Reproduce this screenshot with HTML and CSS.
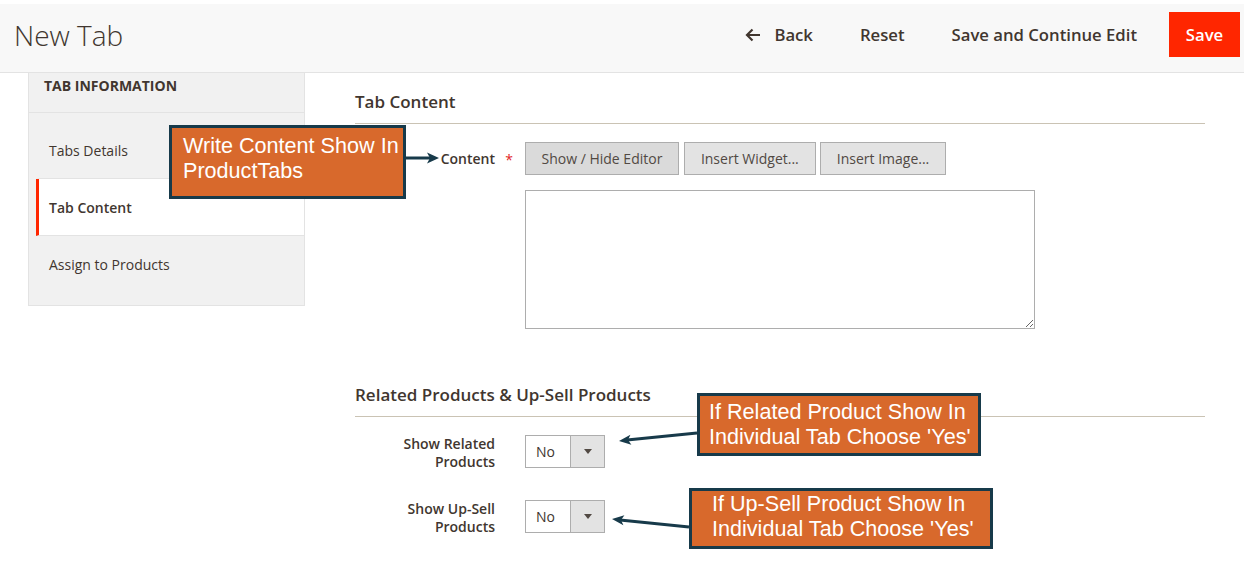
FILE: index.html
```html
<!DOCTYPE html>
<html>
<head>
<meta charset="utf-8">
<title>New Tab</title>
<link rel="stylesheet" href="styles.css">
</head>
<body>
<div class="page">
  <header class="page-header">
    <h1 class="page-title">New Tab</h1>
    <div class="actions">
      <button class="action back"><svg class="back-arrow" width="16" height="14" viewBox="0 0 16 14"><path d="M15 7H2.5M7.5 1.5L2 7l5.5 5.5" fill="none" stroke="#41362f" stroke-width="2.2"/></svg>Back</button>
      <button class="action">Reset</button>
      <button class="action">Save and Continue Edit</button>
      <button class="action primary">Save</button>
    </div>
  </header>

  <div class="columns">
    <aside class="sidebar">
      <div class="sidebar-title">Tab Information</div>
      <ul class="tabs">
        <li class="tab">Tabs Details</li>
        <li class="tab active">Tab Content</li>
        <li class="tab">Assign to Products</li>
      </ul>
    </aside>

    <main class="main">
      <section class="fieldset">
        <h2 class="fieldset-title">Tab Content</h2>
        <div class="field">
          <label class="field-label">Content<span class="req">*</span></label>
          <div class="field-control">
            <div class="editor-buttons">
              <button class="btn active">Show / Hide Editor</button>
              <button class="btn">Insert Widget...</button>
              <button class="btn">Insert Image...</button>
            </div>
            <textarea class="textarea"></textarea>
          </div>
        </div>
      </section>

      <section class="fieldset related">
        <h2 class="fieldset-title">Related Products &amp; Up-Sell Products</h2>
        <div class="field select-field">
          <label class="field-label multi">Show Related Products</label>
          <div class="field-control">
            <div class="select"><span class="select-value">No</span><span class="select-arrow"></span></div>
          </div>
        </div>
        <div class="field select-field">
          <label class="field-label multi">Show Up-Sell Products</label>
          <div class="field-control">
            <div class="select"><span class="select-value">No</span><span class="select-arrow"></span></div>
          </div>
        </div>
      </section>
    </main>
  </div>

  <div class="note note-content">Write Content Show In ProductTabs</div>
  <div class="note note-related">If Related Product Show In Individual Tab Choose 'Yes'</div>
  <div class="note note-upsell">If Up-Sell Product Show In Individual Tab Choose 'Yes'</div>

  <svg class="arrows" width="1244" height="573" viewBox="0 0 1244 573">
    <g stroke="#173a4a" stroke-width="3" fill="none">
      <line x1="406" y1="158" x2="430" y2="158"/>
      <line x1="697" y1="433" x2="627" y2="440"/>
      <line x1="689" y1="527" x2="620" y2="520"/>
    </g>
    <g fill="#173a4a">
      <polygon points="439,158 427,152.5 430,158 427,163.5"/>
      <polygon points="619,441 630.4,434.8 628,440.1 631.4,444.8"/>
      <polygon points="612,519 624.4,515.3 621,519.9 623.4,525.3"/>
    </g>
  </svg>
</div>
</body>
</html>
```

FILE: styles.css
```css
* { box-sizing: border-box; }

html, body {
  margin: 0;
  padding: 0;
  background: #ffffff;
}

body {
  font-family: "Open Sans", "Liberation Sans", sans-serif;
  color: #41362f;
  width: 1244px;
  height: 573px;
  overflow: hidden;
}

.page {
  position: relative;
  width: 1244px;
  height: 573px;
  padding-top: 4px;
}

/* Header */
.page-header {
  display: flex;
  align-items: center;
  justify-content: space-between;
  height: 69px;
  background: #f8f8f8;
  border-bottom: 1px solid #e3e3e3;
  padding: 0 4px 7px 14px;
}

.page-title {
  margin: 0;
  font-size: 28px;
  font-weight: 300;
  line-height: 38px;
  color: #41362f;
}

.actions {
  display: flex;
  align-items: center;
  gap: 17px;
}

.action {
  display: flex;
  align-items: center;
  font-family: "Open Sans", "Liberation Sans", sans-serif;
  font-size: 16.7px;
  font-weight: 600;
  color: #41362f;
  background: transparent;
  border: 0;
  padding: 0 15px;
  height: 45px;
  cursor: pointer;
}

.back-arrow {
  margin-right: 13px;
}

.action.primary {
  justify-content: center;
  background: #ff2600;
  color: #ffffff;
  width: 71px;
  padding: 0;
}

/* Columns */
.columns {
  display: flex;
  gap: 50px;
  padding: 0 39px 0 28px;
}

.sidebar {
  width: 277px;
  flex: none;
  background: #f1f1f1;
  border: 1px solid #e3e3e3;
  border-top: 0;
  height: 233px;
}

.sidebar-title {
  height: 40px;
  padding: 4px 0 0 15px;
  font-size: 14px;
  font-weight: 700;
  text-transform: uppercase;
  line-height: 18px;
  border-bottom: 1px solid #e3e3e3;
  color: #41362f;
}

.tabs {
  list-style: none;
  margin: 0;
  padding: 9px 0 0 7px;
}

.tab {
  height: 57px;
  display: flex;
  align-items: center;
  padding-left: 10px;
  border-left: 3px solid transparent;
  border-bottom: 1px solid #e3e3e3;
  font-size: 14px;
  color: #41362f;
}

.tab:last-child { border-bottom: 0; }

.tab.active {
  background: #ffffff;
  border-left-color: #ff2600;
  font-weight: 600;
}

/* Main */
.main {
  flex: 1;
  padding-top: 18px;
}

.fieldset-title {
  margin: 0;
  font-size: 17px;
  font-weight: 600;
  line-height: 22px;
  padding-bottom: 10px;
  border-bottom: 1px solid #cac3b4;
  color: #41362f;
}

.fieldset .field:first-of-type { margin-top: 18px; }

.field {
  display: flex;
  align-items: flex-start;
}

.field-label {
  position: relative;
  width: 140px;
  margin-right: 30px;
  text-align: right;
  font-size: 14px;
  font-weight: 600;
  line-height: 33px;
  flex: none;
  color: #41362f;
}

.field-label.multi {
  line-height: 18px;
}

.req {
  position: absolute;
  right: -18px;
  top: 1px;
  color: #e22626;
  font-size: 14px;
  font-weight: 400;
}

.editor-buttons {
  display: flex;
  gap: 4px;
}

.btn {
  height: 33px;
  padding: 0 16px;
  font-family: "Open Sans", "Liberation Sans", sans-serif;
  font-size: 14px;
  color: #514943;
  background: #e3e3e3;
  border: 1px solid #adadad;
}

.btn.active {
  background: #dadada;
  margin-right: 1px;
  padding: 0 15.5px;
}

.textarea {
  display: block;
  margin-top: 15px;
  width: 510px;
  height: 139px;
  border: 1px solid #adadad;
  resize: vertical;
  font-family: "Open Sans", "Liberation Sans", sans-serif;
}

.related { margin-top: 55px; }

.select-field + .select-field { margin-top: 29px; }

.select {
  display: flex;
  width: 80px;
  height: 33px;
  border: 1px solid #adadad;
  background: #ffffff;
}

.select-value {
  flex: 1;
  padding-left: 10px;
  font-size: 14px;
  line-height: 31px;
  color: #41362f;
}

.select-arrow {
  width: 34px;
  background: #e3e3e3;
  border-left: 1px solid #adadad;
  position: relative;
}

.select-arrow::after {
  content: "";
  position: absolute;
  left: 13px;
  top: 13px;
  border-left: 4px solid transparent;
  border-right: 4px solid transparent;
  border-top: 5px solid #514943;
}

/* Annotations */
.note {
  position: absolute;
  background: #d8692c;
  border: 3px solid #173a4a;
  color: #ffffff;
  font-family: "Liberation Sans", Arial, sans-serif;
  font-size: 21.6px;
  line-height: 24.5px;
}

.note-content {
  left: 169px;
  top: 125px;
  width: 237px;
  height: 74px;
  padding: 6px 0 0 11px;
}

.note-related {
  left: 697px;
  top: 393px;
  width: 284px;
  height: 63px;
  padding: 4px 0 0 9px;
}

.note-upsell {
  left: 689px;
  top: 488px;
  width: 304px;
  height: 61px;
  padding: 1px 0 0 20px;
}

.arrows {
  position: absolute;
  left: 0;
  top: 0;
  pointer-events: none;
}
```
